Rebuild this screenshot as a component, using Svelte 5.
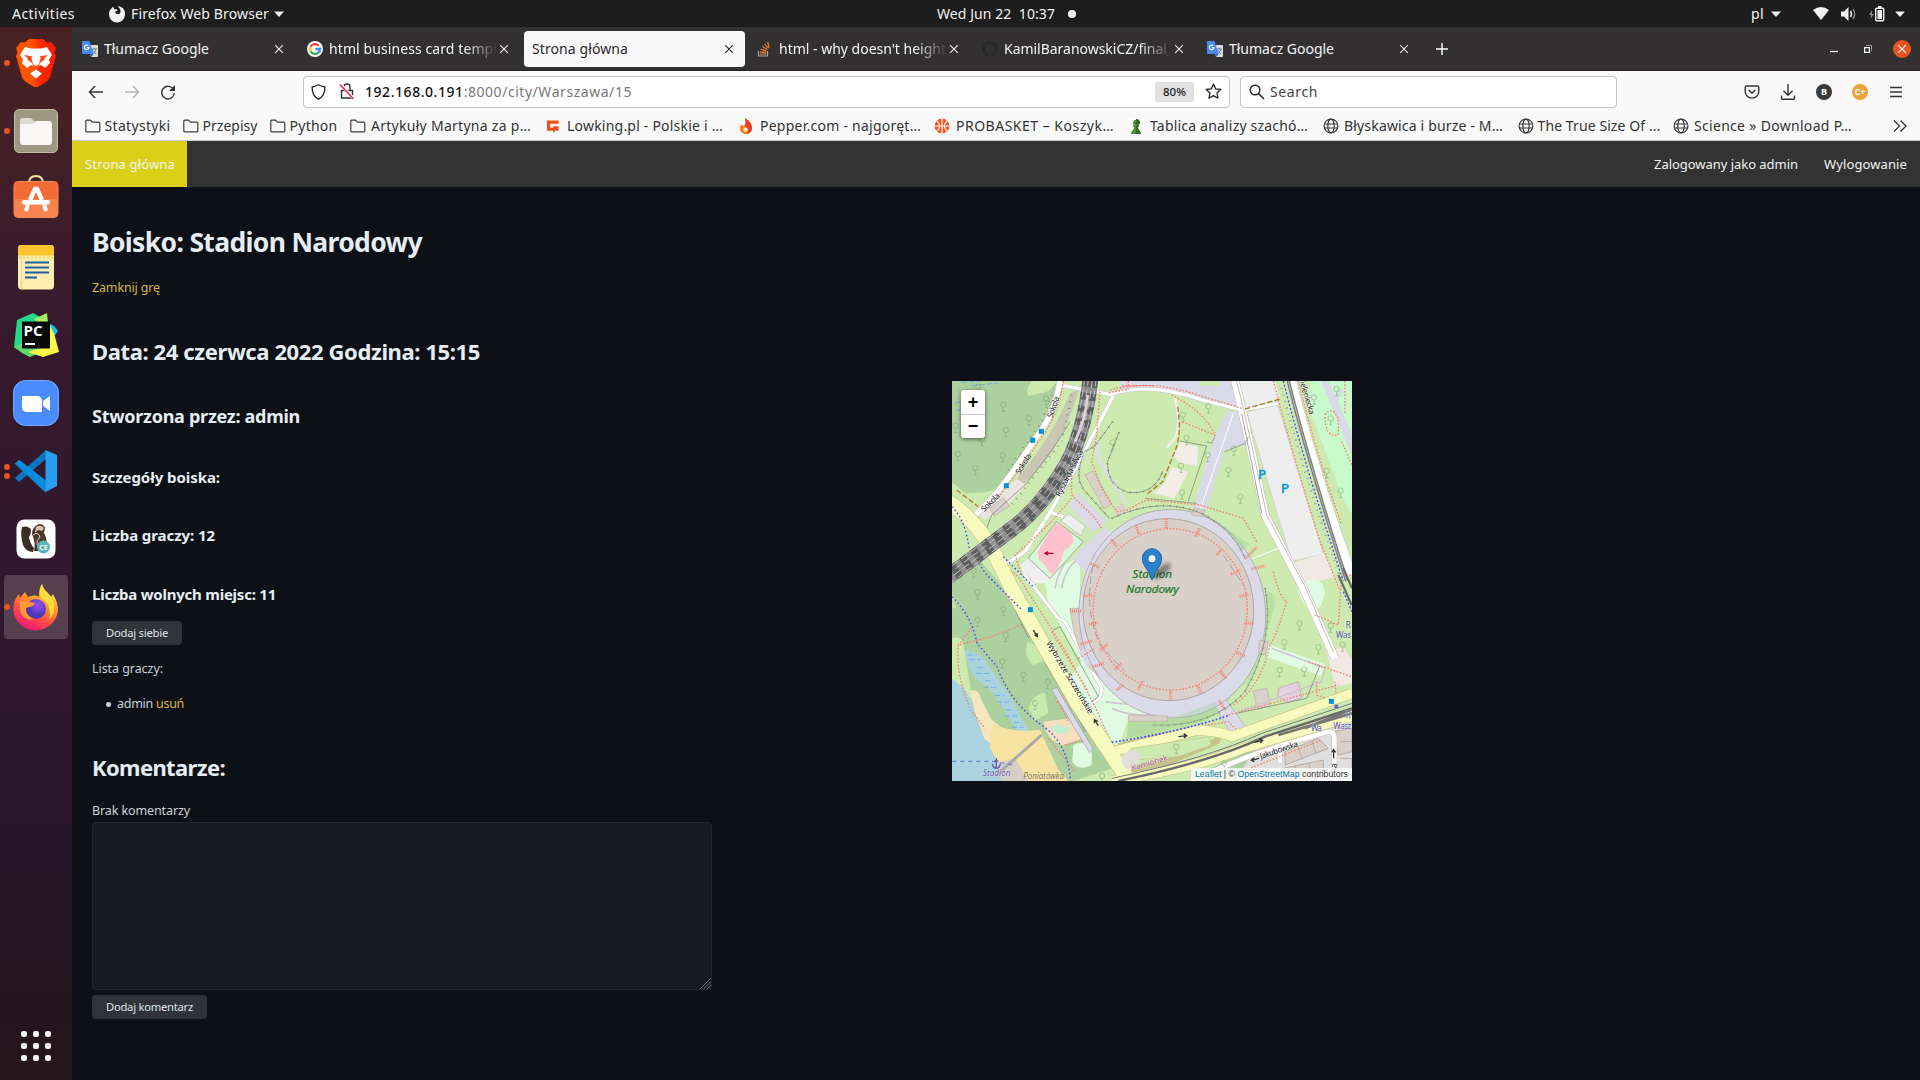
<script>
  // Spreads or tightens the tracking so that a label takes the given width.
  function fit(node, width) {
    const natural = node.getBoundingClientRect().width;
    const count = node.textContent.length;
    if (count > 1) node.style.letterSpacing = `${(width - natural) / count}px`;
  }

  const tabs = [
    { icon: 'translate', title: 'Tłumacz Google', w: 105 },
    { icon: 'google', title: 'html business card templ', w: 168, fade: true },
    { icon: '', title: 'Strona główna', w: 96, active: true },
    { icon: 'stack', title: "html - why doesn't height", w: 167, fade: true },
    { icon: 'github', title: 'KamilBaranowskiCZ/final_', w: 169, fade: true },
    { icon: 'translate', title: 'Tłumacz Google', w: 105 }
  ];

  const bookmarks = [
    { icon: 'folder', title: 'Statystyki', w: 66, box: 98 },
    { icon: 'folder', title: 'Przepisy', w: 55, box: 87 },
    { icon: 'folder', title: 'Python', w: 48, box: 80 },
    { icon: 'folder', title: 'Artykuły Martyna za p…', w: 160, box: 195, wide: true },
    { icon: 'lowking', title: 'Lowking.pl - Polskie i …', w: 156, box: 193, wider: true },
    { icon: 'pepper', title: 'Pepper.com - najgoręt…', w: 161, box: 196, wider: true },
    { icon: 'ball', title: 'PROBASKET – Koszyk…', w: 158, box: 194, wider: true },
    { icon: 'pawn', title: 'Tablica analizy szachó…', w: 158, box: 195, wider: true },
    { icon: 'globe', title: 'Błyskawica i burze - M…', w: 159, box: 195, wide: true },
    { icon: 'globe', title: 'The True Size Of ...', w: 123, box: 155 },
    { icon: 'globe', title: 'Science » Download P…', w: 158, box: 194, wide: true }
  ];

  const apps = [
    { id: 'brave', dots: 1 },
    { id: 'files', dots: 1 },
    { id: 'software', dots: 0 },
    { id: 'editor', dots: 0 },
    { id: 'pycharm', dots: 0 },
    { id: 'zoom', dots: 0 },
    { id: 'vscode', dots: 2 },
    { id: 'dbeaver', dots: 0 },
    { id: 'firefox', dots: 1, active: true }
  ];

  const trees = [
    [99, 38], [175, 92], [252, 133], [182, 168], [111, 195], [38, 240], [173, 244], [91, 282], [31, 155], [303, 73],
    [503, 205], [714, 122], [725, 192], [788, 243], [850, 288], [711, 355], [886, 368], [867, 224], [708, 275], [790, 97],
    [1107, 70], [1175, 45], [1157, 133], [1145, 291], [1187, 350], [1018, 805], [1064, 748], [1004, 888], [1078, 886],
    [1120, 820], [1157, 755], [1193, 812], [98, 655], [98, 737], [175, 705], [182, 783], [172, 862], [235, 902],
    [308, 924], [270, 987], [694, 1118], [838, 1168], [471, 1206], [86, 590]
  ];

  const gates = [
    [664, 431, 664, 462], [572, 451, 583, 480], [498, 493, 516, 515], [438, 565, 462, 578], [415, 663, 446, 663],
    [432, 748, 458, 743], [465, 825, 488, 808], [510, 884, 530, 865], [580, 944, 592, 918], [677, 946, 677, 976],
    [758, 932, 768, 956], [826, 889, 845, 912], [874, 832, 902, 845], [898, 745, 928, 745], [884, 664, 910, 658],
    [858, 598, 886, 585], [815, 540, 830, 522], [752, 484, 764, 460], [375, 708, 410, 708], [408, 808, 440, 798],
    [445, 875, 477, 865], [515, 945, 535, 930], [900, 552, 935, 516], [920, 582, 962, 572], [822, 976, 840, 1004]
  ];

  const stops = [[289, 169], [263, 196], [184, 332], [256, 704], [1159, 979]];

  const railway = 'Q420 160 370 260 290 400 190 470L10 605';
</script>

{#snippet caret()}
  <svg class="caret" width="10" height="6" viewBox="0 0 10 6"><path d="M0 .5h10L5 6z" fill="#f2f2f2" /></svg>
{/snippet}

{#snippet cross(color)}
  <svg width="10" height="10" viewBox="0 0 10 10"><path d="M1.2 1.2l7.6 7.6M8.8 1.2L1.2 8.8" stroke={color} stroke-width="1.2" /></svg>
{/snippet}

{#snippet favicon(name)}
  <svg width="16" height="16" viewBox="0 0 16 16">
    {#if name === 'translate'}
      <path d="M6 4h9a1 1 0 0 1 1 1v10a1 1 0 0 1-1 1H9z" fill="#dcdcdc" />
      <path d="M9 8h6M12 6.6V8M14 8c-.5 2.500-2 4-4 5M10.500 9c.8 1.800 2 3 3.800 3.800" stroke="#607d8b" fill="none" />
      <path d="M1 0h6.500L11.500 13H1a1 1 0 0 1-1-1V1a1 1 0 0 1 1-1z" fill="#4889f4" />
      <path d="M8 13h3.500L9.500 16z" fill="#3367d6" />
      <path d="M6.400 4.800A2.300 2.300 0 1 0 6.900 6.600H4.700" stroke="#fff" fill="none" stroke-width="1.100" />
    {:else if name === 'google'}
      <circle cx="8" cy="8" r="8" fill="#fff" />
      <g fill="none" stroke-width="2.300">
        <path d="M11.700 4.700A5 5 0 0 0 3.600 5.700" stroke="#ea4335" />
        <path d="M3.600 5.700a5 5 0 0 0 0 4.600" stroke="#fbbc05" />
        <path d="M3.600 10.300a5 5 0 0 0 7.700 1.400" stroke="#34a853" />
        <path d="M11.300 11.700A5 5 0 0 0 13 8H8.300" stroke="#4285f4" />
      </g>
    {:else if name === 'stack'}
      <path d="M1.500 10v5h9v-5" stroke="#a9a9a9" fill="none" stroke-width="1.200" />
      <path d="M3 13h6M3.100 10.800l6 .8M3.700 8.200l5.700 1.900M5.300 5.300l4.900 3.400M7.700 2.800l3.600 4.700M10.700 1l1.300 5.800" stroke="#f48024" stroke-width="1.200" />
    {:else if name === 'github'}
      <path d="M8 .3a8 8 0 0 0-2.500 15.500c.4.100.5-.2.500-.4v-1.500c-2.200.5-2.700-1-2.700-1-.4-1-.9-1.200-.9-1.200-.7-.5.100-.5.100-.5.800.1 1.200.8 1.200.8.700 1.200 1.900.9 2.300.7.100-.5.300-.9.500-1.100C4.700 11.400 2.900 10.700 2.900 7.700c0-.9.300-1.600.8-2.200-.1-.2-.4-1 .1-2.100 0 0 .7-.2 2.200.8a7.600 7.600 0 0 1 4 0c1.500-1 2.200-.8 2.200-.8.400 1.100.2 1.900.1 2.100.5.600.8 1.300.8 2.200 0 3-1.900 3.700-3.700 3.900.300.3.600.8.600 1.500v2.300c0 .2.100.5.500.4A8 8 0 0 0 8 .3z" fill="#24292e" />
    {:else if name === 'folder'}
      <path d="M.8 12.800V3.200q0-1 1-1H5.500l1.800 2h6.400q1.100 0 1.100 1.100v7.500q0 1-1 1H1.800q-1 0-1-1z" fill="none" stroke="#3c3c3c" stroke-width="1.200" />
    {:else if name === 'globe'}
      <g fill="none" stroke="#3a3a3a" stroke-width="1.200"><circle cx="8" cy="8" r="6.900" /><ellipse cx="8" cy="8" rx="3.200" ry="6.900" /><path d="M1.500 6h13M1.500 10h13" /></g>
    {:else if name === 'lowking'}
      <path d="M2 2.500h11.500v3.200H5.200v4.100h3V8.200h5.300v4.500h-3l-2.400 2v-2H2z" fill="#ef5018" />
    {:else if name === 'pepper'}
      <path d="M7 0c3 2 7 5.500 7 10 0 3.500-2.500 6-6 6s-6-2.300-6-5.500c0-2 1-3.300 2.200-4.300 0 1.300.6 2 1.500 2C7.700 6.500 8 3 7 0z" fill="#ff7800" />
      <path d="M7 0c3 2 7 5.500 7 10 0 3-2 5.500-5 6 2-3 1-5-2-7C8 6 8 3 7 0z" fill="#e43c28" />
      <circle cx="7.500" cy="11.500" r="2.200" fill="#fff3dd" />
    {:else if name === 'ball'}
      <rect width="16" height="16" fill="#fff" /><circle cx="8" cy="8" r="7.500" fill="#ee5a2a" />
      <path d="M8 0v16M0 8h16M2.500 2.500c4 3.500 4 7.500 0 11M13.500 2.500c-4 3.500-4 7.500 0 11" stroke="#fff" fill="none" stroke-width="1.100" />
    {:else if name === 'pawn'}
      <rect width="16" height="16" fill="#fff" />
      <path d="M3 16c0-2.500 2.500-3.500 3.300-7H5V7.500h1.600A3 3 0 1 1 9.400 7.500H11V9H9.700c.8 3.500 3.300 4.500 3.300 7z" fill="#4f8a35" />
      <path d="M8 1v15h5c0-2.500-2.500-3.500-3.300-7H11V7.500H9.400A3 3 0 0 0 8 1z" fill="#386d26" />
    {/if}
  </svg>
{/snippet}

{#snippet appIcon(id)}
  <svg width="48" height="48" viewBox="0 0 48 48">
    {#if id === 'brave'}
      <defs><linearGradient id="bv"><stop offset=".4" stop-color="#ff5500" /><stop offset=".6" stop-color="#ff2a00" /><stop offset="1" stop-color="#ff1500" /></linearGradient></defs>
      <path d="M17 0h14l4 3.500 4-.5 5 6-1.500 4.500L44 17l-6 21q-1 3-4 5l-8 5q-2 1-4 0l-8-5q-3-2-4-5L4 17l1.500-3.500L4 9l5-6 4 .5z" fill="url(#bv)" />
      <path d="M13 8l6 1.500h10L35 8l5 8-3 4.500 1 3.500-5 5-4-3-3 1.500-2 2-2-2-3-1.500-4 3-5-5 1-3.500L8 16z" fill="#fff" />
      <path d="M12 16l8 1.200-.5 2 1.500 6L24 27l3-1.800 1.500-6-.5-2 8-1.200-4 3.500 1 1-5 3.500-1 3-3 2.500-3-2.500-1-3-5-3.500 1-1z" fill="#ff4a10" />
      <path d="M21 10l3 2 3-2v14h-6z" fill="#fff" />
      <path d="M24 30.500l6 4-6 5-6-5z" fill="#fff" />
    {:else if id === 'files'}
      <rect x="2.500" y="2.500" width="43" height="43" rx="4.500" fill="#9e9883" stroke="#c3bca8" />
      <path d="M8 14q0-3 3-3h8l4 4h6v10H8z" fill="#dedbd0" />
      <path d="M8 17h13l3-3h13q3 0 3 3v18q0 3-3 3H11q-3 0-3-3z" fill="#f8f7f5" />
    {:else if id === 'software'}
      <path d="M17 8.500q0-7.500 7-7.500t7 7.500" stroke="#f9dcae" stroke-width="1.800" fill="none" />
      <rect x="2" y="6.500" width="44" height="36" rx="4" fill="#f26a34" stroke="#f48a55" />
      <path d="M2.500 24h43v14a4 4 0 0 1-4 4H6.500a4 4 0 0 1-4-4z" fill="#f68350" />
      <path d="M18 25l5-11h2l5 11" fill="none" stroke="#fff" stroke-width="4.500" />
      <path d="M16 29l-2 7M32 29l2 7" stroke="#fff" stroke-width="4" />
      <rect x="10" y="25" width="28" height="4.500" rx="2" fill="#fff" />
    {:else if id === 'editor'}
      <rect x="6" y="2" width="36" height="44.500" rx="3.500" fill="#fdeeb0" />
      <path d="M6 12.500V5.500Q6 2 9.500 2h29Q42 2 42 5.500v7z" fill="#fbc52b" />
      <path d="M7 14.500h35" stroke="#f4cf62" stroke-width="1.800" stroke-dasharray="2 2" />
      <path d="M9.500 12.500v34" stroke="#f3c9a0" />
      <path d="M13 19.500h24M13 24.500h24M13 29.500h24M13 34.500h12" stroke="#1f5fa3" stroke-width="2" />
    {:else if id === 'pycharm'}
      <path d="M5 9L21 2l14 8-5 24-12 12L2 36z" fill="#21d789" />
      <path d="M2 36l8 6 8 4 7-3-8-14z" fill="#5fd86b" />
      <path d="M22 8L35 2l2 20z" fill="#a9ed62" />
      <path d="M34 11l8 4 4 5-7 10z" fill="#07c3f2" />
      <path d="M38 14l4 8 5 19-16 5-15-5 20-7z" fill="#fcf84a" />
      <rect x="10" y="10.500" width="28" height="27" fill="#080808" />
      <text x="11.500" y="24.500" class="pc">PC</text><path d="M13 33h10" stroke="#fff" stroke-width="2" />
    {:else if id === 'zoom'}
      <rect x="1.500" y="1.500" width="45" height="45" rx="12" fill="#4a8cfd" stroke="#77a9fb" />
      <path d="M10 17h15q5 0 5 5v11H15q-5 0-5-5zM31 22l7-5v15l-7-5z" fill="#fff" />
    {:else if id === 'vscode'}
      <path d="M7 13l27 23v10L3 17z" fill="#0a84d0" /><path d="M7 35L34 12V3L3 31z" fill="#0877bd" />
      <path d="M3 16.500L7.500 13 34 33.500V45z" fill="#0b8cdc" />
      <path d="M33.500 3L45 8v31l-11.500 6z" fill="#26a0ee" />
    {:else if id === 'dbeaver'}
      <rect x="4.500" y="4.500" width="39" height="39" rx="8" fill="#fff" />
      <path d="M10 12q7-2 9 3 0 4-2 7 1 7 5 11l-1 4q-7 0-10-7Q8 19 10 12z" fill="#3b2d26" />
      <path d="M20 19q0-7 7-10 5 0 6 4l-1 5q4 6 2 18H22q2-8-2-17z" fill="#4a382e" />
      <path d="M24 12q5-3 8 1l-2 3-4-1-3 3z" fill="#d8c4ae" />
      <path d="M21 20q5-4 7 2-4 3-3 8" stroke="#e4d6c6" fill="none" />
      <circle cx="31.500" cy="32" r="6.500" fill="#56b6bb" /><text x="27.300" y="34.800" class="ce">CE</text>
    {:else if id === 'firefox'}
      <defs>
        <linearGradient id="fx" x1=".8" y1="0" x2=".3" y2="1"><stop stop-color="#fff44f" /><stop offset=".4" stop-color="#ff9a2b" /><stop offset=".7" stop-color="#ff4747" /><stop offset="1" stop-color="#f0147f" /></linearGradient>
        <radialGradient id="fp" cx=".6" cy=".3"><stop stop-color="#a04dff" /><stop offset="1" stop-color="#4c3bb8" /></radialGradient>
      </defs>
      <path d="M30 1c1 6 6 8 9 13l2-3c5 9 6 15 4 21a22.500 22.500 0 0 1-43-1C0 23 3 15 7 11l1 4 5-6 3 5c5-2 9-2 11 0 0-5 1-10 3-13z" fill="url(#fx)" />
      <circle cx="24" cy="26" r="10" fill="url(#fp)" />
      <path d="M30 1c1 6 6 8 9 13 5 8 4 17-2 23 3-10-1-17-6-21-5-4-4-10-1-15z" fill="#ffdc3e" />
      <path d="M8 18c6 0 9 1 15 2-1 4-7 4-9 5-1 4 2 9 8 11-8 2-14-4-14-10z" fill="#ff9b35" />
    {/if}
  </svg>
{/snippet}

<div class="desktop">
  <header class="panel">
    <span><span use:fit={63}>Activities</span></span>
    <span class="p-app">
      <svg width="18" height="18" viewBox="0 0 18 18"><path d="M5 1.500l1.500 3C8 4 9 4.500 9.500 5.500L7 7c1 3 5 3 5.500 0C13 4.500 11 3 10 1c5 1 7.500 4 7 9a8 8 0 0 1-16-1C1 6 2.500 4 4 3z" fill="#f2f2f2" /></svg>
      <span use:fit={138}>Firefox Web Browser</span>
      {@render caret()}
    </span>
    <span class="p-clock"><span use:fit={118}>Wed Jun 22&nbsp; 10:37</span><i></i></span>
    <span class="p-status">
      <span use:fit={13}>pl</span>
      {@render caret()}
      <svg class="wifi" width="16" height="13" viewBox="0 0 16 13"><path d="M0 3Q8-3 16 3L8 13z" fill="#f2f2f2" /></svg>
      <svg class="vol" width="16" height="14" viewBox="0 0 16 14"><path d="M0 4.500h3L7.500 0v14L3 9.500H0z" fill="#f2f2f2" /><path d="M9.500 4q2 3 0 6" stroke="#f2f2f2" fill="none" stroke-width="1.400" /><path d="M12 2q3.500 5 0 10" stroke="#888" fill="none" stroke-width="1.400" /></svg>
      <svg class="bat" width="16" height="16" viewBox="0 0 16 16"><path d="M3 4L0 9h2l-.5 4L5 8H3z" fill="#888" /><rect x="6.700" y="2.200" width="8" height="12.600" rx="1" fill="none" stroke="#f2f2f2" stroke-width="1.400" /><path d="M9 0h3.500v2H9zM8.500 4h4.500v9H8.500z" fill="#f2f2f2" /></svg>
      {@render caret()}
    </span>
  </header>

  <div class="workspace">
    <aside class="dock">
      {#each apps as app}
        <div class="slot" class:active={app.active}>
          <span class="dots">{#each Array(app.dots) as _}<i></i>{/each}</span>
          {@render appIcon(app.id)}
        </div>
      {/each}
      <div class="apps-grid">{#each Array(9) as _}<i></i>{/each}</div>
    </aside>

    <div class="window">
      <div class="tabbar">
        {#each tabs as tab}
          <div class="tab" class:active={tab.active}>
            {#if tab.icon}{@render favicon(tab.icon)}{/if}
            <span class="title" class:fade={tab.fade}><span use:fit={tab.w}>{tab.title}</span></span>
            {@render cross(tab.active ? '#333' : '#e8e8e8')}
          </div>
        {/each}
        <svg class="plus" width="12" height="12" viewBox="0 0 12 12"><path d="M6 0v12M0 6h12" stroke="#fff" stroke-width="1.400" /></svg>
        <div class="controls">
          <svg width="8" height="8" viewBox="0 0 8 8"><path d="M0 6.500h8" stroke="#fff" stroke-width="1.300" /></svg>
          <svg width="8" height="8" viewBox="0 0 8 8"><path d="M.6 2.600h4.800v4.800H.6z" stroke="#fff" stroke-width="1.200" fill="none" /><path d="M2 .5h5.500V6" stroke="#999" fill="none" /></svg>
          <span class="close">{@render cross('#fff')}</span>
        </div>
      </div>

      <div class="toolbar">
        <div class="nav-buttons">
          <svg width="16" height="16" viewBox="0 0 16 16"><path d="M15 8H1.500M7 2L1.500 8 7 14" fill="none" stroke="#333" stroke-width="1.400" /></svg>
          <svg width="16" height="16" viewBox="0 0 16 16"><path d="M1 8h13.500M9 2l5.500 6L9 14" fill="none" stroke="#b3b3b3" stroke-width="1.400" /></svg>
          <svg width="16" height="16" viewBox="0 0 16 16"><path d="M13.500 5.500A6.300 6.300 0 1 0 14.300 9" fill="none" stroke="#333" stroke-width="1.400" /><path d="M15 1v6H9z" fill="#333" /></svg>
        </div>
        <div class="urlbar">
          <svg width="15" height="16" viewBox="0 0 15 16"><path d="M7.500.8Q11 2.800 13.900 3C14 9 12 13 7.500 15.200 3 13 1 9 1.100 3 4 2.800 7.500.8 7.500.8z" fill="none" stroke="#222" stroke-width="1.300" /></svg>
          <svg class="lock" width="16" height="17" viewBox="0 0 16 17"><path d="M2.500 7.500h11V15h-11zM5 7V4q0-3 3-3t3 3v3" fill="none" stroke="#333" stroke-width="1.400" /><path d="M1.500 1.500L15 16" stroke="#fff" stroke-width="3" /><path d="M1 1.500L14.500 16" stroke="#e22850" stroke-width="1.500" /></svg>
          <span class="url"><span use:fit={267}><b>192.168.0.191</b>:8000/city/Warszawa/15</span></span>
          <span class="zoomlevel">80%</span>
          <svg width="17" height="17" viewBox="0 0 17 17"><path d="M8.500 1.200l2.200 4.700 5.100.6-3.800 3.500 1 5.200-4.500-2.600L4 15.200 5 10 1.200 6.500l5.100-.6z" fill="none" stroke="#222" stroke-width="1.300" stroke-linejoin="round" /></svg>
        </div>
        <div class="searchbar">
          <svg width="16" height="16" viewBox="0 0 16 16"><circle cx="6" cy="6" r="4.800" fill="none" stroke="#222" stroke-width="1.400" /><path d="M9.500 9.500L15 15" stroke="#222" stroke-width="1.500" /></svg>
          <span use:fit={48}>Search</span>
        </div>
        <div class="extensions">
          <svg width="16" height="16" viewBox="0 0 16 16"><path d="M2.500 2h11q1.300 0 1.300 1.300V7.500a6.800 6.600 0 0 1-13.600 0V3.300Q1.200 2 2.500 2zM4.800 6L8 9.200 11.200 6" fill="none" stroke="#333" stroke-width="1.400" /></svg>
          <svg width="16" height="16" viewBox="0 0 16 16"><path d="M8 0v11M3.500 6.800L8 11.200l4.500-4.400M1.500 11.500V14q0 1.200 1.200 1.200h10.600q1.200 0 1.200-1.200v-2.500" fill="none" stroke="#333" stroke-width="1.400" /></svg>
          <span class="badge dark">B</span>
          <span class="badge orange">C+</span>
          <svg width="16" height="16" viewBox="0 0 16 16"><path d="M2 3.500h12M2 8h12M2 12.500h12" stroke="#333" stroke-width="1.300" /></svg>
        </div>
      </div>

      <div class="bookmarks">
        {#each bookmarks as b}
          <div class="bookmark" class:wide={b.wide} class:wider={b.wider} style:width="{b.box}px">
            {@render favicon(b.icon)}
            <span use:fit={b.w}>{b.title}</span>
          </div>
        {/each}
        <svg class="more" width="14" height="12" viewBox="0 0 14 12"><path d="M1 .5L6.500 6 1 11.500M7.500 .5L13 6 7.500 11.500" fill="none" stroke="#333" stroke-width="1.300" /></svg>
      </div>

      <nav class="site-nav">
        <a class="home" href="#home"><span use:fit={90}>Strona główna</span></a>
        <a class="user" href="#user"><span use:fit={144}>Zalogowany jako admin</span></a>
        <a href="#logout"><span use:fit={83}>Wylogowanie</span></a>
      </nav>

      <main class="page">
        <section class="details">
          <h1><span use:fit={330}>Boisko: Stadion Narodowy</span></h1>
          <p class="manage"><a href="#close"><span use:fit={68}>Zamknij grę</span></a></p>
          <h2 class="date"><span use:fit={388}>Data: 24 czerwca 2022 Godzina: 15:15</span></h2>
          <h3><span use:fit={208}>Stworzona przez: admin</span></h3>
          <h4 class="first"><span use:fit={128}>Szczegóły boiska:</span></h4>
          <h4><span use:fit={123}>Liczba graczy: 12</span></h4>
          <h4 class="last"><span use:fit={184}>Liczba wolnych miejsc: 11</span></h4>
          <button class="join"><span use:fit={62}>Dodaj siebie</span></button>
          <p class="list-title"><span use:fit={71}>Lista graczy:</span></p>
          <ul><li><span use:fit={36}>admin</span><a href="#remove"><span use:fit={28}>usuń</span></a></li></ul>
          <h2 class="comments"><span use:fit={133}>Komentarze:</span></h2>
          <p class="empty"><span use:fit={98}>Brak komentarzy</span></p>
          <div class="comment-box">
            <svg width="11" height="11" viewBox="0 0 11 11"><path d="M0 11L11 0M3.500 11L11 3.500M7 11l4-4" stroke="#6b6f75" /></svg>
          </div>
          <button class="send"><span use:fit={87}>Dodaj komentarz</span></button>
        </section>

        <div class="map">
          <svg width="400" height="400" viewBox="21 18 1200 1200">
            <defs><filter id="soft" x="-50%" y="-50%" width="200%" height="200%"><feGaussianBlur stdDeviation="6" /></filter></defs>
            <rect x="21" y="18" width="1200" height="1200" fill="#cdebb0" />

            <!-- woods, water and beach -->
            <path d="M21 18H335Q325 90 288 155L215 262Q190 310 160 340L120 352 60 355 21 322z" fill="#add19e" />
            <path d="M262 18h75l-25 30-60 15q-15-15 10-45z" fill="#cdebb0" />
            <path d="M50 22l60-4m-30 14l80-8m-130 60l40-8m-38 30l40-6" stroke="#6fb1e8" stroke-width="3" stroke-dasharray="16 7" />
            <path d="M21 620L100 550l60 70L505 1180l-120 38H21z" fill="#add19e" />
            <path d="M21 650q30 120 70 160 60 30 100 90l80 120-60 80-150-10-70-200z" fill="#cdebb0" opacity=".55" />
            <path d="M21 700q60 0 60 60l110 120 80 130 40 50 80 158H180L120 1000 21 870z" fill="#add19e" />
            <path d="M21 790q30-10 35 20l20 130 30 90 30 110-40-60-75-160z" fill="#cdebb0" />
            <path d="M248 800q40 10 45 60l-30 10q-30-30-15-70zM250 1000q20-50 50-45l10 60-40 20z" fill="#c8eaae" />
            <path d="M21 910L60 945l50 80 30 90 45 103H21z" fill="#aad3df" />
            <path d="M60 825q50 5 80 60l60 90 55 100-25 18-60-100-40-60q-60-20-70-108z" fill="#aad3df" />
            <path d="M68 840h28m-22 14h34m-12 24h25m-28 17h40m-12 22h24m-30 20h42m-8 24h30m-24 20h38m-10 24h25m-30 18h40m-12 20h24m-30 14h38" stroke="#6fb1e8" stroke-width="3" stroke-dasharray="16 7" />
            <path d="M76 948q25-10 32 24l30 60 50 40-10 60-60-40-28-80z" fill="#f5e6c0" />
            <path d="M140 1045q60 30 145 20l55 120 30 33H190l-55-100z" fill="#f7e3a2" />
            <path d="M295 1040l80-10 40 60-60 20q-50-10-60-70z" fill="#f5dfbf" />
            <path d="M385 1110q30-15 55 5v55q-40 20-58-10z" fill="#dffce2" />
            <path d="M320 1055l12-6h16l6 6h20v14h-14v8h-24v-8h-16z" fill="#bff0d2" />
            <path d="M150 1165l60-15 40 68H170z" fill="#d6cfc8" />
            <path d="M160 1195L290 1080" stroke="#aaa" stroke-width="9" />

            <!-- paved areas around the arena -->
            <path d="M525 18H880l15 90-160-45-120-22-90 16z" fill="#dadae8" />
            <path d="M765 18h60v14h-60z" fill="#cdebb0" />
            <path d="M845 105l45 10 16 90-66 20-60 195h-42l50-170 20-60z" fill="#dadae8" />
            <path d="M875 18h115l15 55-105 27z" fill="#eee" />
            <path d="M905 112l92-25 138 450-95 22z" fill="#eee" stroke="#d4c8c8" stroke-width="2" />
            <path d="M1040 565l98-30 30 70-100 30z" fill="#f2e9e4" />
            <path d="M710 200l50 15-5 58-50-10-22-20zM680 275l50 15-30 60-15 20-60-15q40-30 55-80z" fill="#f2ede6" />
            <path d="M375 55l30-15-35 95Q330 240 235 328l-20-15Q300 210 345 120z" fill="#c9c6b4" />
            <path d="M215 312l28 18-62 68-60 35-28-20z" fill="#eee4df" />
            <path d="M175 368l18 25-45 30-14-23z" fill="#d9d0c9" stroke="#b5a69b" stroke-width="2" />
            <path d="M400 355l-30 35 75 85 40-38z" fill="#dadae8" />
            <path d="M420 300l25-13 55 100-22 15z" fill="#d9d0c9" stroke="#b9aaa0" stroke-width="2" />
            <path d="M505 400l30-14 12 15-30 24z" fill="#d9d0c9" />
            <path d="M225 570l30-25 65 55-15 25h-60z" fill="#eee" />

            <!-- mint lawns -->
            <path d="M300 620q80-80 105-60v150l60 170q50 90 203 115v30l-123 20-25 75-80-70-75-130 45-60-100-170z" fill="#dffce2" />
            <path d="M335 440l80 60-100 110-65-60z" fill="#d8f8dc" stroke="#888" stroke-width="2" />
            <path d="M325 452q15-18 32 8 25 12 30 37-12 20-30 30-20 70-40 70l-18-28q-25-15-20-40 30-50 46-77z" fill="#ffc0cb" />
            <path d="M370 415l50 38-12 30-60-45z" fill="#eee" stroke="#bbb" stroke-width="2" />
            <path d="M1080 620q50-20 60 30-10 60-40 60-30-20-42-70z" fill="#dffce2" />
            <path d="M970 808l170 60-12 35-165-58z" fill="#dffce2" />
            <path d="M1100 18h121v400q-40-60-50-110L1085 80z" fill="#c8facc" />
            <path d="M1128 18l95 230V180L1150 18z" fill="#dadae8" />
            <path d="M1195 45q-35 20-15 70" stroke="#dadae8" stroke-width="14" fill="none" />
            <path d="M1145 830l50-15 26 40v70l-50 10z" fill="#f2e9e4" />

            <!-- south side -->
            <path d="M550 1020l115 5q100-10 200-80l-35 75-285 70z" fill="#c5e5a5" />
            <path d="M750 1218q150-100 471-190v190z" fill="#e0dfdf" />
            <path d="M740 1218q100-70 190-95l-60 95z" fill="#add19e" />
            <path d="M1020 1130l100-40 30 30-130 50zM1165 1070l56-10v70l-40 10zM1015 1180l120-25v50l-120 13z" fill="#d9d0c9" stroke="#b9aaa0" stroke-width="3" />
            <path d="M1060 1115l12 38M1100 1098l14 38M1050 1172l4 36M1092 1163l4 36M1185 1100h36M1185 1150h36v68" stroke="#b9aaa0" stroke-width="3" fill="none" />
            <path d="M925 948l40-8 12 52-40 10z" fill="#d9d0c9" stroke="#b9aaa0" stroke-width="2" />
            <path d="M1000 940l60-20 10 48-40 14-32-18z" fill="#e5cfe2" stroke="#b59ab5" stroke-width="2" />

            <!-- small streets -->
            <g fill="none" stroke-linejoin="round">
              <g stroke="#c9c4c2">
                <path d="M345 30L495 58Q620 20 770 75L890 105 1000 85" stroke-width="13" />
                <path d="M505 62L400 265 310 420 240 530 180 570M310 410l45 15" stroke-width="13" />
                <path d="M345 18Q335 90 296 155L230 252Q150 370 85 425" stroke-width="19" />
                <path d="M870 18Q910 180 960 420L1070 630 1170 850" stroke-width="27" />
                <path d="M1040 18Q1110 300 1221 600" stroke-width="30" />
                <path d="M240 600l100 130q20 5 25 20l105 190q0 30-25 44" stroke-width="12" />
                <path d="M1005 1165v-60M740 1218Q920 1130 1150 1070q18 0 18 20v128" stroke-width="18" />
              </g>
              <g stroke="#fff">
                <path d="M345 30L495 58Q620 20 770 75L890 105 1000 85" stroke-width="10" />
                <path d="M505 62L400 265 310 420 240 530 180 570M310 410l45 15" stroke-width="10" />
                <path d="M345 18Q335 90 296 155L230 252Q150 370 85 425" stroke-width="16" />
                <path d="M870 18Q910 180 960 420L1070 630 1170 850" stroke-width="23" />
                <path d="M1040 18Q1110 300 1221 600" stroke-width="26" />
                <path d="M240 600l100 130q20 5 25 20l105 190q0 30-25 44" stroke-width="9" />
                <path d="M1005 1165v-60M740 1218Q920 1130 1150 1070q18 0 18 20v128" stroke-width="14" />
                <path d="M865 115L765 405M900 560l100-40" stroke-width="3" />
              </g>
              <path d="M455 195l8 60 60 100 18 30" stroke="#dadfe4" stroke-width="11" />
              <path d="M690 70q20 80 0 120l-25 28" stroke="#f2ede6" stroke-width="8" />
              <path d="M875 18Q915 180 965 420L1078 630 1165 830" stroke="#cbb" stroke-width="3" />
              <path d="M480 980q60 10 190 10M500 1000q60 30 170 15M330 640q10-60 50-100M350 640q10-60 50-90M980 820l160 60-10 40-250 90" stroke="#cdc6cc" stroke-width="5" />
            </g>

            <!-- stadium -->
            <path d="M805 985l35-15 65 90-45 20z" fill="#dadae8" stroke="#aaa" stroke-width="2" />
            <path d="M375 700h35l50 140 80 70-25 45-80-75q-45-60-60-180z" fill="#d9d0c9" stroke="#b9aaa0" stroke-width="2" />
            <path d="M405 830l35-20 28 45-45 20z" fill="#dadae8" />
            <path d="M385 550q60-70 100-95l40 50-95 100z" fill="#dadae8" />
            <ellipse cx="682" cy="716" rx="280" ry="313" fill="#dadae8" stroke="#9a9aa5" stroke-width="2" transform="rotate(-4 682 716)" />
            <ellipse cx="670" cy="704" rx="256" ry="273" fill="#d9d0c9" stroke="#a89c98" stroke-width="2.500" transform="rotate(-4 670 704)" />
            <path d="M945 795l25 5-8 40-22-8zM745 400l35 5-5 20-35-5zM550 1020l118 3v16H550z" fill="#d9d0c9" stroke="#b9aaa0" stroke-width="2" />
            <path d="M445 570q-30 130 20 240l75 80M835 540l60 90" stroke="#999" stroke-width="2.500" stroke-dasharray="24 10" fill="none" />

            <!-- footpaths -->
            <g fill="none" stroke="#fa8072" stroke-width="4" stroke-dasharray="5 5">
              <ellipse cx="676" cy="703" rx="231" ry="242" />
              <path d="M355 18Q345 100 305 165L240 260Q190 330 150 380" />
              <path d="M465 50l-10 130-15 80 30 80 45 70 30-5 60-30 160 15 130 40 40 70" />
              <path d="M495 45Q620 12 760 60l130 40M680 60q100 50 130 120l-100-40" />
              <path d="M380 290v70l70 70 20 30M380 370l-70 80-100 90 20 60" />
              <path d="M985 18q60 230 140 480l60 150M1060 18q60 240 130 430" />
              <path d="M1140 120q20-30 40 10v50q-40 10-40-60M1190 200l31 70M1200 18v100" />
              <path d="M985 590q20 80 40 90-30 100-50 130-30 130-110 180M1110 720l70 30 10-150h30M1090 860l130 45M1115 920v40l60 20-5-60" />
              <path d="M240 745l-100 40-100 25q-10 90 40 200l40 50M80 760l-40 50M335 980l100 50M310 1090l80 100M360 1110l70-20" />
              <path d="M160 555l60 50 140 220 90 170 50 110M400 850l50-30M320 770l110 180" />
              <path d="M850 1020l330-90M720 1060l130-20 50 50M890 1190l240-95M1030 1180l-5 38M550 18v25l-60 10M530 32h100" />
              <path d="M340 980l30 60M350 960l30 60" />
            </g>
            <g stroke="#fa8072" stroke-width="9" stroke-dasharray="3 3">
              {#each gates as [x1, y1, x2, y2]}<line {x1} {y1} {x2} {y2} />{/each}
            </g>
            <g fill="none" stroke="#a97b28" stroke-width="4" stroke-dasharray="16 7">
              <path d="M698 95q15 90-15 150l-30 75-50 40M900 102l105-30M35 345l65 50" />
            </g>

            <!-- embankments and fences -->
            <g fill="none" stroke="#777" stroke-width="2">
              <path d="M503 140l-55 75-30 15q-30 70-5 110l80 90M522 172l-35 90q0 70 60 90 80 10 107-65" />
              <path d="M375 140Q330 220 240 330l-100 90-15 40M705 198l80 15-55 165M785 200l15 5 10-20" />
              <path d="M600 370l155 15M840 230l60-25 10-20M890 115l60 300" />
              <path d="M325 765l20-10 115 210-20 15M210 705l20-5 40 75-20 12zM300 865l12-8 130 200-20 12z" />
              <path d="M875 1015l210-45 40-100" />
              <path d="M500 430q150-70 280-10 90 50 120 130M960 640q30 150-60 310-100 110-280 100" />
            </g>
            <g fill="none" stroke="#777" stroke-width="7" stroke-dasharray="2 18">
              <path d="M503 140l-55 75-30 15q-30 70-5 110l80 90M522 172l-35 90q0 70 60 90 80 10 107-65" />
              <path d="M500 430q150-70 280-10 90 50 120 130M960 640q30 150-60 310-100 110-280 100" />
              <path d="M1010 40q60 240 180 580M380 60L350 200 200 390M320 60L290 140 180 300" />
            </g>
            <path d="M805 430q70 50 110 80l-30 20q-30-60-80-100zM965 650q35 0 20 60l-60 200-40 30q90-100 80-290zM550 1042h100l160-60 10 30-90 60-185 20z" fill="#9c9" opacity=".35" />

            <!-- right hand tracks -->
            <path d="M1030 18q60 240 175 600" stroke="#777" stroke-width="10" fill="none" />
            <path d="M1030 18q60 240 175 600" stroke="#ddd" stroke-width="2" fill="none" />
            <path d="M1015 18q60 240 180 600M1195 650l26 60" stroke="#4545ff" stroke-width="4" stroke-dasharray="6 6" fill="none" />
            <path d="M1195 580l26 60M1180 600l40 90" stroke="#666" stroke-width="6" fill="none" />

            <!-- main roads -->
            <g fill="none">
              <path d="M10 380Q100 440 150 540L200 640 290 800 400 990 500 1140 560 1230" stroke="#c6c389" stroke-width="47" />
              <path d="M500 1130Q660 1090 760 1065 830 1070 860 1085L1221 955" stroke="#c6c389" stroke-width="32" />
              <path d="M500 1218Q750 1180 900 1118L1221 1025" stroke="#c6c389" stroke-width="32" />
              <path d="M520 1115Q760 1050 800 1070t0 35l-140 60-150 30" stroke="#c6c389" stroke-width="20" />
              <path d="M10 380Q100 440 150 540L200 640 290 800 400 990 500 1140 560 1230" stroke="#f7fabf" stroke-width="43" />
              <path d="M500 1130Q660 1090 760 1065 830 1070 860 1085L1221 955" stroke="#f7fabf" stroke-width="28" />
              <path d="M500 1218Q750 1180 900 1118L1221 1025" stroke="#f7fabf" stroke-width="28" />
              <path d="M560 1120l230-35 10 25-100 35-135 10q-30-15-5-35z" fill="#cdebb0" stroke="#c6c389" stroke-width="2" />
              <path d="M530 1155q5-30 45-30l15 20-30 40q-25 0-30-30z" fill="#e3dedb" />
              <path d="M520 1218Q800 1160 960 1085L1221 1000" stroke="#666" stroke-width="7" />
              <path d="M500 1210Q790 1150 950 1075L1221 985" stroke="#777" stroke-width="3" />
              <path d="M1000 1080l221-65M1080 1060l141-58" stroke="#777" stroke-width="8" />
              <path d="M500 1102q200-30 350-80" stroke="#4545ff" stroke-width="5" stroke-dasharray="5 6" />
              <path d="M21 395q40 40 50 120l50 80 110 110M21 665q60 60 75 140l60 70q40 110 140 180 70 50 80 155M175 545l90 90" stroke="#4545ff" stroke-width="4" stroke-dasharray="5 7" />
              <path d="M21 1159h120l60 10" stroke="#6c70d5" stroke-width="3" stroke-dasharray="14 10" />
            </g>
            <path d="M320 945l15-8 110 185-12 10z" fill="#dadae8" stroke="#999" stroke-width="2" />

            <!-- railway viaduct: four parallel tracks -->
            <g fill="none">
              <path d="M436 14{railway}" stroke="#8e8e8e" stroke-width="48" />
              <path d="M436 14{railway}" stroke="#5f5f5f" stroke-width="46" stroke-dasharray="22 18" />
              <path d="M419 10Q404 152 355 248 276 385 178 455L-2 590" stroke="#bdbdbd" stroke-width="3" stroke-dasharray="24 9" />
              <path d="M430 12Q414 158 365 256 285 395 186 465L6 600" stroke="#c4c4c4" stroke-width="3" stroke-dasharray="20 12" />
              <path d="M442 14Q425 163 375 264 295 405 194 475L14 610" stroke="#c4c4c4" stroke-width="3" stroke-dasharray="24 9" />
              <path d="M453 14Q436 167 385 272 304 415 202 485L22 620" stroke="#bdbdbd" stroke-width="3" stroke-dasharray="20 12" />
              <path d="M428 60Q423 130 390 200" stroke="#e3d2e1" stroke-width="8" />
            </g>

            {#each trees as [x, y]}
              <g fill="none" stroke="#6f9e66" stroke-width="2" opacity=".75"><circle cx={x} cy={y - 3} r="8" /><path d="M{x} {y + 5}v12m-5 0h10" /></g>
            {/each}
            {#each stops as [x, y]}<rect x={x - 7.500} y={y - 7.500} width="15" height="15" fill="#0092da" />{/each}
            <rect x="1168" y="989" width="12" height="12" fill="#6c6cc0" />
            <path d="M326 535h-25m8-5l-9 5 9 5" stroke="#c3002f" stroke-width="4" fill="none" />
            <g fill="none" stroke="#333" stroke-width="4">
              <path d="M265 765l12 20m-1-11l1 11-9-5M460 1052l-12-18m0 11v-11l10 5M700 1085l25-3m-9-6l9 6-8 6M928 1102l25-6m-10-5l10 5-7 8M942 1150l-23 6m8-8l-8 8 9 4M1166 1150v-26m-6 8l6-8 6 8" />
            </g>
            <path d="M154 1150v30m-12-14q2 14 12 14t12-14m-18-8h12" stroke="#5a5ab5" stroke-width="4" fill="none" />

            <g class="street">
              <text transform="translate(322 130) rotate(-71)" textLength="66">Sokola</text>
              <text transform="translate(224 300) rotate(-58)" textLength="68">Sokola</text>
              <text transform="translate(118 412) rotate(-45)" textLength="68">Sokola</text>
              <text transform="translate(345 367) rotate(-63)" textLength="154">Ryszarda Siwca</text>
              <text transform="translate(303 804) rotate(59)" textLength="250">Wybrzeże Szczecińskie</text>
              <text transform="translate(1064 22) rotate(73)" textLength="102">ieleniecka</text>
              <text transform="translate(948 1152) rotate(-19)" textLength="119">Jakubowska</text>
              <text transform="translate(1176 1192) rotate(-90)">ka</text>
            </g>
            <g class="parking"><text x="939" y="312">P</text><text x="1008" y="353">P</text></g>
            <g class="transit">
              <text x="1173" y="788" textLength="45">Was</text><text x="1202" y="758">R</text>
              <text x="1098" y="1067" textLength="32">Wa</text><text x="1165" y="1061" textLength="54">Wasz</text><text x="1202" y="1030">R</text>
              <text x="114" y="1204" textLength="82" class="pier">Stadion</text>
              <text transform="translate(562 1188) rotate(-17)" textLength="112" class="district">Kamionek</text>
              <text x="235" y="1212" textLength="122" class="beach">Poniatówka</text>
            </g>
            <g class="venue"><text x="622" y="610">Stadion</text><text x="622" y="653">Narodowy</text></g>

            <!-- marker -->
            <ellipse cx="650" cy="588" rx="34" ry="13" fill="#222" opacity=".5" transform="rotate(-40 650 588)" filter="url(#soft)" />
            <path d="M621 615q-6-22-21-40-8-11-8-25a29 29 0 0 1 58 0q0 14-8 25-15 18-21 40z" fill="#2b82cb" stroke="#2668a5" stroke-width="3" />
            <circle cx="621" cy="551" r="10" fill="#fff" />
          </svg>
          <div class="zoom-control"><span>+</span><span>−</span></div>
          <div class="attribution"><a href="#leaflet">Leaflet</a> | © <a href="#osm">OpenStreetMap</a> contributors</div>
        </div>
      </main>
    </div>
  </div>
</div>

<style>
  :global(body) { margin: 0; background: #0d1017; }
  .desktop { width: 1920px; height: 1080px; display: flex; flex-direction: column; overflow: hidden; font-family: "Noto Sans", "Open Sans", sans-serif; }
  .desktop :global(svg) { display: block; flex: none; }
  span { white-space: nowrap; }
  a { text-decoration: none; }

  .panel { height: 27px; box-sizing: border-box; background: #1d1d1d; color: #f2f2f2; font-size: 14px; line-height: 26px; display: grid; grid-template-columns: 96px 829px 1fr auto; padding: 0 15px 0 12px; }
  .panel > span { display: flex; align-items: center; height: 27px; }
  .p-app svg { margin-right: 5px; }
  .p-app .caret { margin: 0 0 0 5px; }
  .p-clock i { width: 8px; height: 8px; border-radius: 50%; background: #f2f2f2; margin-left: 13px; }
  .p-status .caret { margin-left: 7px; }
  .p-status .wifi { margin-left: 32px; }
  .p-status .vol { margin-left: 12px; }
  .p-status .bat { margin-left: 12px; }
  .p-status .bat + .caret { margin-left: 10px; }

  .workspace { flex: 1; min-height: 0; display: flex; }
  .dock { width: 72px; display: flex; flex-direction: column; align-items: center; gap: 4px; padding: 4px 0 19px; box-sizing: border-box; background: linear-gradient(#492122 0%, #421f28 12%, #36192d 30%, #2f172d 58%, #29152a 78%, #24151e 90%, #24161b 100%); }
  .slot { width: 64px; height: 64px; border-radius: 4px; display: flex; align-items: center; justify-content: center; position: relative; flex: none; }
  .slot.active { background: #56404f; }
  .dots { position: absolute; left: 0; top: 0; height: 64px; display: flex; flex-direction: column; justify-content: center; gap: 3px; }
  .dots i { width: 6px; height: 6px; border-radius: 50%; background: #e95420; }
  .apps-grid { margin-top: auto; display: grid; grid-template-columns: repeat(3, 6px); gap: 6px; }
  .apps-grid i { width: 6px; height: 6px; border-radius: 2px; background: #f2f0ee; }
  .pc { font: 700 15px "Open Sans", sans-serif; fill: #fff; }
  .ce { font: 700 7px "Open Sans", sans-serif; fill: #fff; }

  .window { flex: 1; min-width: 0; display: flex; flex-direction: column; background: #0d1017; }
  .tabbar { height: 44px; box-sizing: border-box; background: #333031; border-bottom: 1px solid #232122; display: flex; align-items: center; padding: 0 9px 0 2px; color: #f5f5f5; font-size: 14px; }
  .tab { width: 221px; height: 36px; margin-right: 4px; box-sizing: border-box; padding: 0 11px 0 8px; display: flex; align-items: center; border-radius: 4px; flex: none; }
  .tab > :global(svg:first-child) { margin-right: 6px; }
  .tab .title { flex: 1; overflow: hidden; line-height: 34px; padding-top: 1px; }
  .tab .title > span { display: inline-block; }
  .tab .title.fade { mask-image: linear-gradient(90deg, #000 80%, transparent 99%); }
  .tab.active { background: #f9f9fa; color: #2b2b2b; }
  .plus { margin-left: 12px; }
  .controls { margin-left: auto; display: flex; align-items: center; gap: 26px; }
  .close { width: 18px; height: 18px; border-radius: 50%; background: #e95420; display: flex; align-items: center; justify-content: center; }
  .controls .close { margin-left: -5px; }

  .toolbar { height: 41px; flex: none; background: #f9f9fa; display: flex; align-items: center; padding: 0 16px; color: #222; font-size: 14px; }
  .nav-buttons { display: flex; gap: 20px; width: 215px; }
  .urlbar, .searchbar { height: 32px; box-sizing: border-box; border: 1px solid #c3c3c5; border-radius: 4px; background: #fff; display: flex; align-items: center; line-height: 30px; }
  .urlbar { width: 927px; padding: 0 7px 0 7px; }
  .lock { margin-left: 13px; }
  .url { flex: 1; margin-left: 10px; color: #777; }
  .url b { color: #111; font-weight: 500; }
  .zoomlevel { background: #e0e0e1; border-radius: 3px; width: 39px; height: 20px; line-height: 20px; text-align: center; font-size: 11.5px; font-weight: 500; margin-right: 11px; }
  .searchbar { width: 377px; margin-left: 10px; padding: 0 8px; gap: 5px; color: #444; }
  .extensions { margin-left: auto; display: flex; gap: 20px; align-items: center; }
  .badge { width: 16px; height: 16px; border-radius: 50%; color: #fff; font-size: 9px; font-weight: 700; line-height: 16px; text-align: center; }
  .badge.dark { background: #3a3a3a; }
  .badge.orange { background: #eda33c; }

  .bookmarks { height: 29px; box-sizing: border-box; flex: none; background: #f9f9fa; border-bottom: 1px solid #c9c9c9; display: flex; align-items: center; padding: 0 13px; color: #333; font-size: 14px; line-height: 26px; }
  .bookmark { display: flex; align-items: center; gap: 3.500px; flex: none; }
  .bookmark.wide { gap: 5px; }
  .bookmark.wider { gap: 6px; }
  .more { margin-left: auto; }

  .site-nav { height: 46px; flex: none; background: #333; display: flex; justify-content: flex-end; font-size: 13px; line-height: 46px; }
  .site-nav a { color: #f2f2f2; padding: 0 13px; }
  .site-nav .home { background: #dccf18; margin-right: auto; padding: 0 12px 0 13px; }

  .page { flex: 1; min-height: 0; display: flex; padding-left: 20px; color: #c9d1d9; font-size: 12.500px; }
  .details { width: 860px; padding-top: 38px; display: flex; flex-direction: column; align-items: flex-start; flex: none; }
  h1, h2, h3, h4, p, ul { margin: 0; padding: 0; }
  h1, h2, h3, h4 { color: #e6edf3; font-weight: 700; }
  h1 { font-size: 26.500px; line-height: 34px; }
  h2 { font-size: 22px; line-height: 30px; }
  h3 { font-size: 18px; line-height: 24px; margin-top: 38px; }
  h4 { font-size: 15px; line-height: 20px; margin-top: 38px; }
  h4.first { margin-top: 39px; }
  h4.last { margin-top: 39px; }
  p, li { line-height: 20px; }
  .details a { color: #d8b348; }
  .manage { margin-top: 19px; }
  .date { margin-top: 38px; }
  button { height: 24px; border: 0; border-radius: 4px; background: #30333a; color: #dfe3e8; font-family: inherit; font-size: 11.200px; line-height: 22px; padding: 0 14px 1px; }
  .join { margin-top: 17px; width: 90px; }
  .list-title { margin-top: 14px; }
  ul { margin-top: 15px; list-style: none; }
  li { display: flex; align-items: center; gap: 3px; padding-left: 14px; }
  li::before { content: ""; width: 5px; height: 5px; border-radius: 50%; background: #c9d1d9; margin-right: 3px; }
  .comments { margin-top: 38px; }
  .empty { margin-top: 19px; }
  .comment-box { width: 620px; height: 168px; box-sizing: border-box; margin-top: 1px; border: 1px solid #22272e; border-radius: 4px; background: #161b22; display: flex; align-items: flex-end; justify-content: flex-end; }
  .send { margin-top: 5px; width: 115px; }

  .map { width: 400px; height: 400px; margin-top: 194px; position: relative; overflow: hidden; flex: none; }
  .zoom-control { position: absolute; left: 9px; top: 9px; width: 24px; height: 48px; border-radius: 3px; background: #fff; box-shadow: 0 1px 4px rgba(0, 0, 0, .6); color: #000; font: 700 18px/24px "Liberation Sans", sans-serif; text-align: center; }
  .zoom-control span { display: block; height: 24px; }
  .zoom-control span + span { border-top: 1px solid #ccc; height: 23px; line-height: 23px; }
  .attribution { position: absolute; right: 0; bottom: 0; height: 13px; padding: 0 4px; background: rgba(255, 255, 255, .78); color: #333; font: 8.800px/13px "Liberation Sans", sans-serif; white-space: nowrap; }
  .attribution a { color: #0078a8; }
  .street { font-size: 24px; fill: #111; stroke: rgba(255, 255, 255, .7); stroke-width: 3px; paint-order: stroke; }
  .parking { font-size: 40px; fill: #0092da; stroke: #0092da; stroke-width: 1.500px; }
  .transit { font-size: 24px; fill: #5050a8; stroke: rgba(255, 255, 255, .6); stroke-width: 2px; paint-order: stroke; }
  .pier { font-style: italic; fill: #6650a8; }
  .district { fill: #a05a8c; }
  .beach { font-style: italic; fill: #85703a; }
  .venue { font-size: 35px; font-style: italic; fill: #19772b; stroke: #19772b; stroke-width: .6px; text-anchor: middle; }
</style>
